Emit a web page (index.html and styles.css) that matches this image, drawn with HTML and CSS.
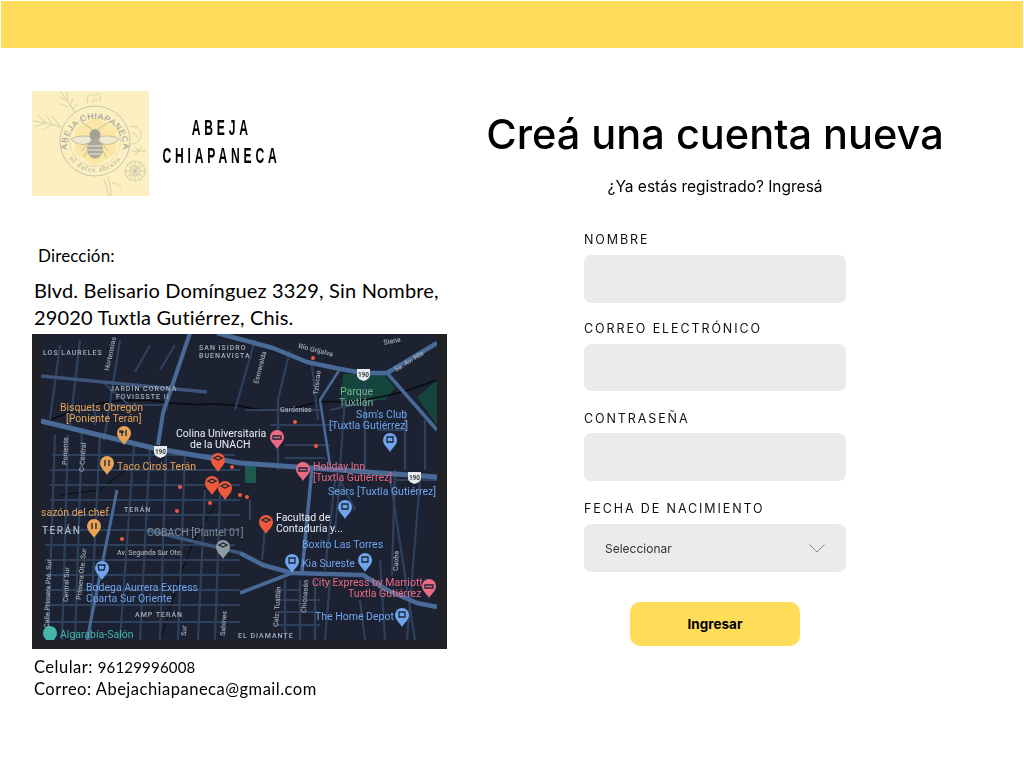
FILE: index.html
```html
<!DOCTYPE html>
<html lang="es">
    <head>
        <title>Abeja Chiapaneca</title>
        <meta charset="UTF-8">
        <link rel="stylesheet" href="styles.css">
    </head>
    <body>
        <div class="barra"></div>
        <div class="contenido">
            <div class="izquierda">
                <div class="marca">
                    <svg class="logo" viewBox="0 0 117 105" role="img" aria-label="Logo Abeja Chiapaneca">
                        <rect width="117" height="105" fill="#fdf0c0"/>
                        <g fill="none" stroke="#bcbaa8" stroke-width=".6">
                            <path d="M29 1 C34 8 39 15 44 23M28 6l6 4M35 1l1 9M41 7l-3 8M29 13l7 3M45 13l-5 6"/>
                            <path d="M1 30 C10 31 20 33 28 36M6 25l8 6M2 36l11-4M14 25l6 7M12 38l9-5M20 25l12 15"/>
                            <path d="M99 60h15M103 56l4 4M109 56l-3 4M102 64l5-4"/>
                            <path d="M56 12 C53 5 58 2 62 5 C64 1 70 3 68 10M60 12c1-3 4-4 6-2"/>
                            <path d="M98 36c6-3 12 3 11 9-1 5-5 8-10 8M100 42c3 0 5 2 5 5"/>
                            <path d="M76 86 C78 94 79 100 79 105M72 88l5 17M80 92c4 0 7 2 9 5"/>
                            <circle cx="103" cy="80" r="10"/>
                            <circle cx="103" cy="80" r="5"/>
                            <path d="M95 74l16 12M95 86l16-12M103 70v20M93 80h20M98 71l10 18M108 71l-10 18"/>
                        </g>
                        <circle cx="63" cy="50" r="35" fill="#fdf0c0" stroke="#b5b5b0" stroke-width=".8"/>
                        <circle cx="63" cy="50" r="25.500" fill="#fdf0c0" stroke="#c4c4bc" stroke-width=".5"/>
                        <path d="M63 26 L84 38 V62 L63 75 L43 62 V38 Z" fill="#fbe7a5"/>
                        <g stroke="#8d8c82" fill="none" stroke-width=".5">
                            <path d="M60 38 49 31M66 38 77 31"/>
                            <path d="M59 46 C52 44 44 45 39 48 C44 54 53 55 59 51Z" fill="#efe9d0"/>
                            <path d="M67 46 C74 44 82 45 87 48 C82 54 73 55 67 51Z" fill="#efe9d0"/>
                            <path d="M56 52 50 60M70 52 76 60M56 58 52 66M70 58 74 66"/>
                        </g>
                        <ellipse cx="63" cy="44" rx="5.500" ry="6" fill="#a4a297"/>
                        <ellipse cx="63" cy="58" rx="8" ry="9.500" fill="#aaa89c"/>
                        <path d="M56 55h14M55 59h16M57 63h12" stroke="#f1ead0" stroke-width="1.200"/>
                        <defs>
                            <path id="arcoArriba" d="M35 56 A28 28 0 1 1 91 56"/>
                            <path id="arcoAbajo" d="M33 60 A32 32 0 0 0 93 60"/>
                        </defs>
                        <text class="logo-texto"><textPath href="#arcoArriba" startOffset="50%" text-anchor="middle">ABEJA CHIAPANECA</textPath></text>
                        <text class="logo-lema"><textPath href="#arcoAbajo" startOffset="50%" text-anchor="middle">el dulce abrazo</textPath></text>
                    </svg>
                    <div class="nombre">
                        <span>ABEJA</span>
                        <span>CHIAPANECA</span>
                    </div>
                </div>

                <p class="direccion-titulo">Dirección:</p>
                <p class="direccion">Blvd. Belisario Domínguez 3329, Sin Nombre,<br>29020 Tuxtla Gutiérrez, Chis.</p>

                <svg class="mapa" viewBox="32 334 415 315" role="img" aria-label="Mapa de Tuxtla Gutiérrez">
                    <defs>
                        <filter id="suave" x="0" y="0" width="100%" height="100%"><feGaussianBlur stdDeviation=".45"/></filter>
                        <path id="pin" d="M0 9 C-2 5 -7 2 -7 -3 A7 7 0 0 1 7 -3 C7 2 2 5 0 9Z"/>
                    </defs>
                    <rect x="32" y="334" width="415" height="315" fill="#202124"/>
                    <svg x="41" y="334" width="396" height="306" viewBox="41 334 396 306">
                        <g filter="url(#suave)">
                            <rect x="41" y="334" width="396" height="306" fill="#1a2333"/>
                            <path d="M343 374 H384 L395 388 L385 400 H345 L340 404 Z" fill="#17453e"/>
                            <path d="M417 397 L437 380 V425 Z" fill="#17453e"/>
                            <rect x="245" y="466" width="11" height="17" fill="#1a5a50"/>
                            <path d="M41 424 C90 402 120 396 165 402 C200 408 215 400 250 408 C290 416 310 398 345 402 C385 398 405 392 437 380" fill="none" stroke="#07090e" stroke-width="1.500"/>
                            <path d="M160 640 C175 600 178 560 215 505M125 470L100 490L60 495" fill="none" stroke="#07090e" stroke-width="1"/>

                            <g fill="none" stroke="#2d405c" stroke-width="2.200">
                                <path d="M60 345L50 420M80 340L70 425M120 340L104 440M165 405H110M100 380L135 410M75 410H95V425M150 345L135 372M175 345L160 370"/>
                                <path d="M52 455H235M50 470H240M50 485H240M50 500H240M48 515H240M45 530H240M45 545H235M45 560H240M45 575H240M45 590H240M45 605H240M45 622H240"/>
                                <path d="M55 435L48 640M68 435L62 640M82 430L75 640M100 435L90 640M134 445L120 640M150 448L140 640M166 452L160 640M185 455L178 640M205 490L198 640M220 495L215 640"/>
                                <path d="M255 340L235 410M290 350L278 400M312 365L318 420M345 395L340 470M365 375V470M405 410V470M425 420V470"/>
                                <path d="M278 400V470M245 410H320M270 425H335M285 445H330M285 458H325M330 410L375 400M378 430H405"/>
                                <path d="M275 590L300 590M275 600H320M275 612H320M275 625H320M300 580V640M315 580V640M330 580L325 640M285 580V640"/>
                                <path d="M335 480L325 570M355 510L340 480L335 530M390 478L415 640M420 480L407 640M380 560L385 640M395 470L392 575M250 500V520M265 528L262 560M395 480H437M360 600L365 640"/>
                            </g>
                            <g fill="none" stroke="#486a96" stroke-width="3.500" stroke-linejoin="round">
                                <path d="M41 421L153 448L240 463L297 467L437 477" stroke-width="5"/>
                                <path d="M190 333L163 413L158 445" stroke-width="4"/>
                                <path d="M217 333L273 348L307 362L340 369L363 373H387L437 343" stroke-width="4.500"/>
                                <path d="M387 373L437 430"/>
                                <path d="M41 376L207 392" stroke="#3d5578"/>
                                <path d="M240 553L263 565L292 573L363 575L387 590L417 603L437 607" stroke-width="4.500"/>
                                <path d="M240 593L292 573"/>
                                <path d="M312 468L302 572"/>
                                <path d="M147 530L240 553" stroke="#3d5578"/>
                                <path d="M117 490L87 640" stroke-width="3"/>
                                <path d="M330 465L320 400L340 369" stroke-width="2.500"/>
                            </g>

                            <g fill="#ef5a3c">
                                <circle cx="313" cy="358" r="2"/>
                                <circle cx="295" cy="422" r="2"/>
                                <circle cx="316" cy="446" r="2"/>
                                <circle cx="232" cy="467" r="2"/>
                                <circle cx="180" cy="487" r="2"/>
                                <circle cx="240" cy="495" r="2"/>
                                <circle cx="247" cy="497" r="2"/>
                                <circle cx="210" cy="503" r="2"/>
                                <circle cx="177" cy="511" r="2"/>
                                <circle cx="122" cy="539" r="2"/>
                            </g>

                            <g fill="#e8a257">
                                <use href="#pin" x="124" y="436"/><use href="#pin" x="107" y="466"/><use href="#pin" x="94" y="529"/>
                            </g>
                            <g fill="#ef5a3c">
                                <use href="#pin" x="218" y="463"/><use href="#pin" x="212" y="486"/><use href="#pin" x="225" y="491"/><use href="#pin" x="266" y="525"/>
                            </g>
                            <g fill="#ec6a84">
                                <use href="#pin" x="277" y="440"/><use href="#pin" x="303" y="472"/><use href="#pin" x="429" y="589"/>
                            </g>
                            <g fill="#6fa5ee">
                                <use href="#pin" x="390" y="443"/><use href="#pin" x="345" y="510"/><use href="#pin" x="292" y="564"/><use href="#pin" x="365" y="563"/><use href="#pin" x="402" y="618"/><use href="#pin" x="102" y="571"/>
                            </g>
                            <use href="#pin" x="223" y="550" fill="#8f9ba3"/>
                            <use href="#pin" x="50" y="636" fill="#45b5aa"/>
                            <g fill="none" stroke="#1b2536" stroke-width="1.300">
                                <path d="M122 430v6M126 430v6M120 430v2h4M105 460v6M109 460v6M92 523v6M96 523v6"/>
                                <path d="M214 458l4-2 4 2-4 2zM208 481l4-2 4 2-4 2zM221 486l4-2 4 2-4 2zM262 520l4-2 4 2-4 2zM219 545l4-2 4 2-4 2z"/>
                                <path d="M273 436h8v3h-8zM299 468h8v3h-8zM425 585h8v3h-8z"/>
                                <path d="M387 437h6v5h-6zM342 504h6v5h-6zM289 558h6v5h-6zM362 557h6v5h-6zM399 612h6v5h-6zM98 565h7l-1 5h-5z"/>
                            </g>

                            <text class="m-barrio" x="43" y="355">LOS LAURELES</text>
                            <text class="m-barrio" x="199" y="350">SAN ISIDRO</text>
                            <text class="m-barrio" x="199" y="358">BUENAVISTA</text>
                            <text class="m-barrio" x="110" y="391">JARDÍN CORONA</text>
                            <text class="m-barrio" x="116" y="399">FOVISSSTE II</text>
                            <text class="m-barrio" x="124" y="512">TERÁN</text>
                            <text class="m-barrio m-grande" x="42" y="534">TERÁN</text>
                            <text class="m-barrio" x="135" y="617">AMP TERÁN</text>
                            <text class="m-barrio" x="238" y="638">EL DIAMANTE</text>
                            <text class="m-calle" x="117" y="555">Av. Segunda Sur Ote.</text>
                            <text class="m-calle" x="280" y="412">Gardenias</text>
                            <text class="m-calle" transform="translate(109 371) rotate(-78)">Hortensias</text>
                            <text class="m-calle" transform="translate(67 465) rotate(-88)">Poniente</text>
                            <text class="m-calle" transform="translate(84 472) rotate(-86)">C-Central</text>
                            <text class="m-calle" transform="translate(49 628) rotate(-88)">Calle Primera Pte. Sur</text>
                            <text class="m-calle" transform="translate(68 602) rotate(-88)">Central Sur</text>
                            <text class="m-calle" transform="translate(81 600) rotate(-84)">Primera Ote. Sur</text>
                            <text class="m-calle" transform="translate(258 384) rotate(-75)">Esmeralda</text>
                            <text class="m-calle" transform="translate(318 395) rotate(-84)">Tzíscao</text>
                            <text class="m-calle" transform="translate(298 348) rotate(14)">Río Grijalva</text>
                            <text class="m-calle" transform="translate(384 345) rotate(-12)">Siena</text>
                            <text class="m-calle" transform="translate(396 372) rotate(-32)">5a. Av. Nte</text>
                            <text class="m-calle" transform="translate(278 627) rotate(-86)">Calz. Tuxtlán</text>
                            <text class="m-calle" transform="translate(306 613) rotate(-86)">Chicoasén</text>
                            <text class="m-calle" transform="translate(398 571) rotate(-88)">Caoba</text>
                            <text class="m-calle" transform="translate(186 636) rotate(-86)">Sur</text>
                            <text class="m-calle" transform="translate(225 636) rotate(-86)">Sabines</text>
                            <text class="m-gris-medio" x="147" y="536">COBACH [Plantel 01]</text>

                            <g class="m-etiqueta">
                                <g fill="#e8a257">
                                    <text x="60" y="411">Bisquets Obregón</text>
                                    <text x="66" y="422">[Poniente Terán]</text>
                                    <text x="117" y="470">Taco Ciro's Terán</text>
                                    <text x="41" y="516">sazón del chef</text>
                                </g>
                                <g fill="#eceff3">
                                    <text x="176" y="437">Colina Universitaria</text>
                                    <text x="190" y="448">de la UNACH</text>
                                    <text x="276" y="521">Facultad de</text>
                                    <text x="276" y="532">Contaduría y...</text>
                                </g>
                                <g fill="#ec6a84">
                                    <text x="313" y="470">Holiday Inn</text>
                                    <text x="313" y="481">[Tuxtla Gutiérrez]</text>
                                    <text x="312" y="586">City Express by Marriott</text>
                                    <text x="348" y="597">Tuxtla Gutiérrez</text>
                                </g>
                                <g fill="#6fa5ee">
                                    <text x="356" y="418">Sam's Club</text>
                                    <text x="329" y="429">[Tuxtla Gutiérrez]</text>
                                    <text x="328" y="495">Sears [Tuxtla Gutiérrez]</text>
                                    <text x="302" y="548">Boxito Las Torres</text>
                                    <text x="302" y="567">Kia Sureste</text>
                                    <text x="315" y="620">The Home Depot</text>
                                    <text x="86" y="591">Bodega Aurrera Express</text>
                                    <text x="86" y="602">Cuarta Sur Oriente</text>
                                </g>
                                <text x="340" y="395" fill="#6fb48c">Parque</text>
                                <text x="339" y="406" fill="#6fb48c">Tuxtlán</text>
                                <text x="60" y="638" fill="#45b5aa">Algarabía-Salón</text>
                            </g>
                            <g fill="#e8eaed">
                                <path d="M154 446h13v6c0 3-3 5-6.500 6-3.500-1-6.500-3-6.500-6z"/>
                                <path d="M357 369h13v6c0 3-3 5-6.500 6-3.500-1-6.500-3-6.500-6z"/>
                                <path d="M408 472h13v6c0 3-3 5-6.500 6-3.500-1-6.500-3-6.500-6z"/>
                            </g>
                            <g class="m-ruta-num">
                                <text x="160.500" y="454">190</text>
                                <text x="363.500" y="377">190</text>
                                <text x="414.500" y="480">190</text>
                            </g>
                        </g>
                    </svg>
                </svg>

                <p class="contacto">Celular: <span class="numero">96129996008</span><br>Correo: Abejachiapaneca@gmail.com</p>
            </div>

            <div class="derecha">
                <h1>Creá una cuenta nueva</h1>
                <p class="registrado">¿Ya estás registrado? Ingresá</p>
                <form class="formulario">
                    <label class="campo campo-nombre">NOMBRE<input type="text"></label>
                    <label class="campo campo-correo">CORREO ELECTRÓNICO<input type="email"></label>
                    <label class="campo campo-clave">CONTRASEÑA<input type="password"></label>
                    <div class="campo campo-fecha">FECHA DE NACIMIENTO
                        <div class="selector">
                            <span>Seleccionar</span>
                            <svg width="16" height="9" viewBox="0 0 16 9"><path d="M.5 .5 8 8 15.500 .5" fill="none" stroke="#8a8a8a" stroke-width="1"/></svg>
                        </div>
                    </div>
                    <button type="button" class="boton">Ingresar</button>
                </form>
            </div>
        </div>
    </body>
</html>
```

FILE: styles.css
```css
html, body {
    margin: 0;
    padding: 0;
    height: 768px;
    overflow: hidden;
    background: #fff;
}

body {
    font-family: "Inter", "Liberation Sans", sans-serif;
    color: #000;
}

p, h1 {
    margin: 0;
}

.barra {
    height: 47px;
    margin: 1px 1px 0;
    background: #ffdd5b;
}

.contenido {
    display: flex;
}

/* columna izquierda */
.izquierda {
    width: 415px;
    margin-left: 32px;
    padding-top: 43px;
}

.marca {
    display: flex;
    align-items: center;
    gap: 15px;
}

.logo {
    display: block;
    width: 117px;
    height: 105px;
}

.logo-texto {
    font-family: "Liberation Sans", sans-serif;
    font-size: 8.500px;
    letter-spacing: .6px;
    fill: #97978f;
}

.logo-lema {
    font-family: "Liberation Serif", serif;
    font-size: 7px;
    letter-spacing: 1.200px;
    fill: #a3a398;
}

.nombre {
    display: flex;
    flex-direction: column;
    align-items: center;
    gap: 7px;
    width: 116px;
    margin-top: -4px;
    font-family: "Liberation Sans", sans-serif;
    font-size: 22px;
    font-weight: 700;
    line-height: 21px;
    letter-spacing: 7px;
}

.nombre span {
    white-space: nowrap;
    transform: scaleX(.55);
}

.direccion-titulo {
    margin: 50px 0 0 6px;
    font-family: "Lato", sans-serif;
    font-size: 17px;
    line-height: 20px;
    letter-spacing: .15px;
}

.direccion {
    margin: 11px 0 0 2px;
    font-family: "Lato", sans-serif;
    font-size: 20px;
    line-height: 27px;
    letter-spacing: .17px;
    white-space: nowrap;
}

.mapa {
    display: block;
    width: 415px;
    height: 315px;
    margin-top: 3px;
}

.contacto {
    margin: 7px 0 0 2px;
    font-family: "Lato", sans-serif;
    font-size: 16.500px;
    line-height: 22px;
    letter-spacing: .5px;
    white-space: nowrap;
}

.numero {
    font-size: 15px;
    letter-spacing: .2px;
}

/* textos del mapa */
.mapa text {
    font-family: "Roboto", sans-serif;
}

.m-barrio {
    font-size: 7px;
    font-weight: 500;
    letter-spacing: 1px;
    fill: #a9b0bb;
}

.m-grande {
    font-size: 10px;
    letter-spacing: 1.500px;
}

.m-calle {
    font-size: 7px;
    font-weight: 500;
    fill: #a3a9b3;
}

.m-gris-medio {
    font-size: 10.500px;
    fill: #7f8792;
}

.m-etiqueta {
    font-size: 10.500px;
}

.m-ruta-num text {
    font-size: 6.500px;
    font-weight: 700;
    text-anchor: middle;
    fill: #3c4043;
}

/* columna derecha */
.derecha {
    flex: 1;
    display: flex;
    flex-direction: column;
    align-items: center;
    margin-left: 7px;
    margin-right: 48px;
    padding-top: 60px;
}

h1 {
    font-size: 41.500px;
    line-height: 52px;
    font-weight: 500;
    white-space: nowrap;
}

.registrado {
    margin-top: 17px;
    font-size: 15.500px;
    line-height: 20px;
}

.formulario {
    display: flex;
    flex-direction: column;
    width: 262px;
    margin-top: 34px;
}

.campo {
    display: block;
    font-size: 12.500px;
    line-height: 17px;
    letter-spacing: 1.900px;
    color: #111;
}

.campo input,
.selector {
    display: block;
    box-sizing: border-box;
    width: 262px;
    height: 48px;
    margin-top: 7px;
    border: 0;
    border-radius: 7px;
    background: #ebebeb;
}

.campo-correo {
    margin-top: 17px;
}

.campo-correo input {
    height: 47px;
}

.campo-clave {
    margin-top: 19px;
}

.campo-clave input {
    margin-top: 6px;
}

.campo-fecha {
    margin-top: 19px;
}

.selector {
    display: flex;
    align-items: center;
    justify-content: space-between;
    padding: 0 21px 0 21px;
    font-size: 12px;
    letter-spacing: 0;
    color: #333;
}

.boton {
    align-self: center;
    width: 170px;
    height: 44px;
    margin-top: 30px;
    border: 0;
    border-radius: 10px;
    background: #ffdd5b;
    font-family: "Inter", "Liberation Sans", sans-serif;
    font-size: 13.500px;
    font-weight: 700;
    color: #000;
}
```
